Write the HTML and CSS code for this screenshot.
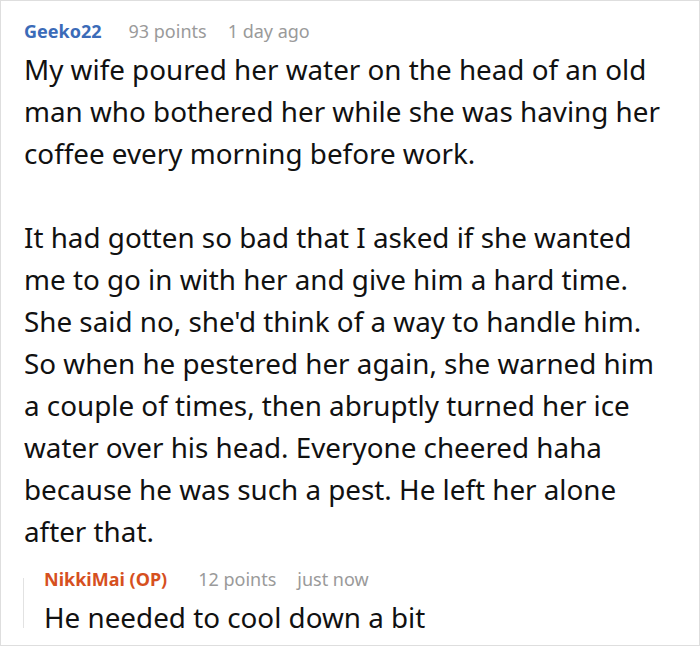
FILE: index.html
```html
<!DOCTYPE html>
<html>
<head>
<meta charset="utf-8">
<link rel="stylesheet" href="styles.css">
</head>
<body>
<div class="comment">
  <div class="meta">
    <span class="author">Geeko22</span>
    <span class="points">93 points</span>
    <span class="time">1 day ago</span>
  </div>
  <div class="body">
    <p>My wife poured her water on the head of an old man who bothered her while she was having her coffee every morning before work.</p>
    <p>It had gotten so bad that I asked if she wanted me to go in with her and give him a hard time. She said no, she'd think of a way to handle him. So when he pestered her again, she warned him a couple of times, then abruptly turned her ice water over his head. Everyone cheered haha because he was such a pest. He left her alone after that.</p>
  </div>
  <div class="reply">
    <div class="meta">
      <span class="author op">NikkiMai (OP)</span>
      <span class="points">12 points</span>
      <span class="time">just now</span>
    </div>
    <div class="body">
      <p>He needed to cool down a bit</p>
    </div>
  </div>
</div>
</body>
</html>
```
FILE: styles.css
```css
html, body {
  margin: 0;
  padding: 0;
  background: #fff;
}
body {
  font-family: "Noto Sans", "Open Sans", sans-serif;
  color: #111;
}
.comment {
  box-sizing: border-box;
  width: 700px;
  height: 646px;
  border: 1px solid #dedede;
  padding: 17px 29px 0 23px;
  overflow: hidden;
}
.meta {
  display: flex;
  align-items: center;
  font-size: 18px;
  line-height: 26px;
  height: 26px;
  margin-bottom: 4px;
  color: #9a9a9a;
}
.author {
  font-weight: 700;
  color: #3b6bb8;
  margin-right: 27px;
}
.author.op {
  color: #d6501e;
  margin-right: 31px;
}
.points {
  margin-right: 21px;
}
.body {
  font-size: 27.8px;
  line-height: 42px;
}
.body p {
  margin: 0 0 42px 0;
}
.body p:last-child {
  margin-bottom: 0;
}
.reply {
  position: relative;
  margin-top: 14px;
  margin-left: -1px;
  padding-left: 21px;
}
.reply::before {
  content: "";
  position: absolute;
  left: 0;
  top: 12px;
  bottom: 10px;
  width: 1px;
  background: #e2e2e2;
}
```
